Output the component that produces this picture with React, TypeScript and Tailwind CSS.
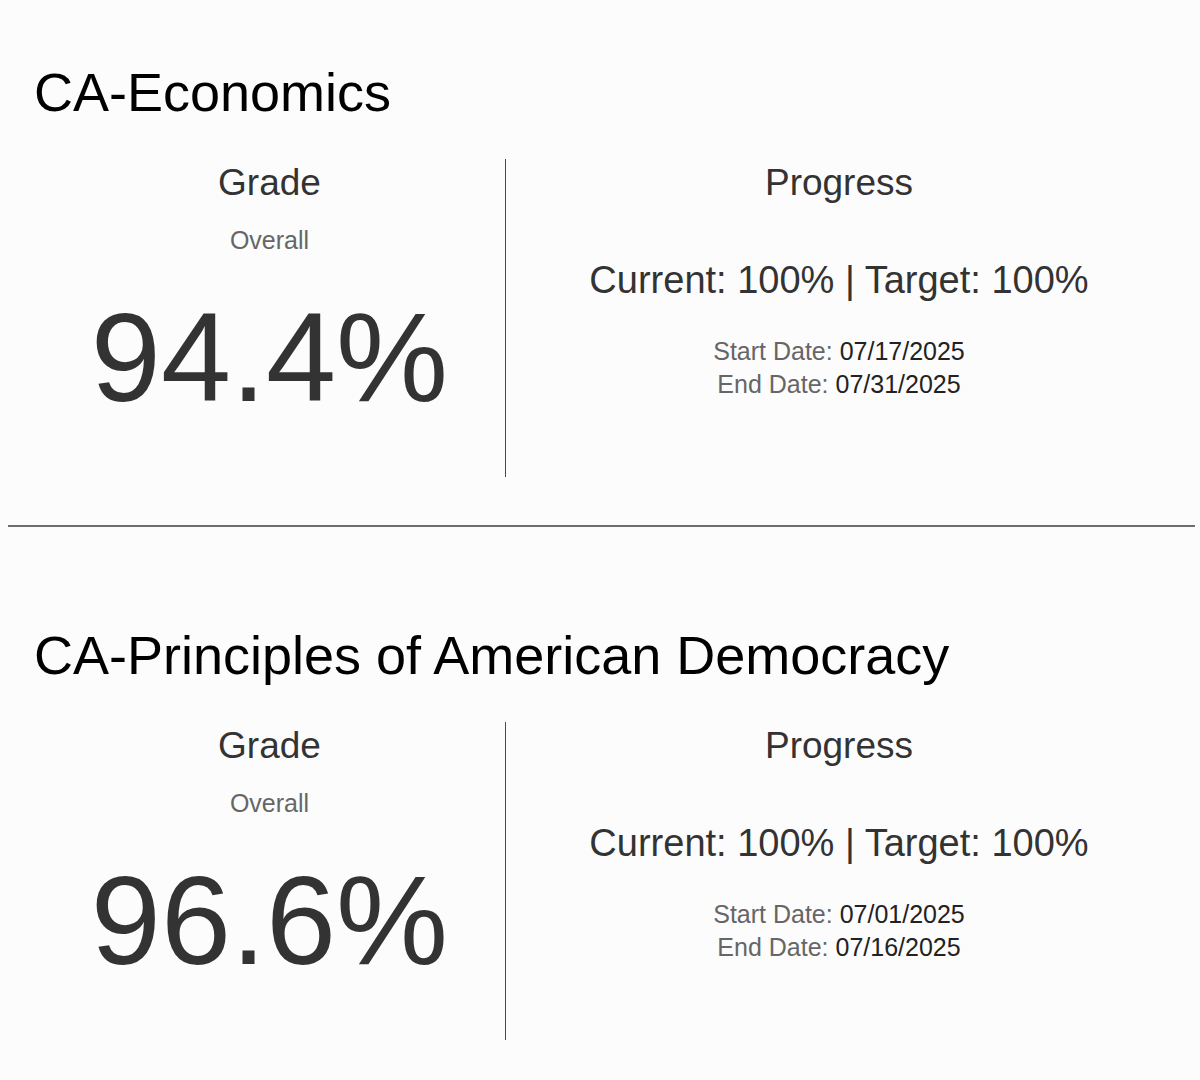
type Course = {
  title: string;
  grade: string;
  current: string;
  target: string;
  startDate: string;
  endDate: string;
};

const courses: Course[] = [
  {
    title: "CA-Economics",
    grade: "94.4%",
    current: "100%",
    target: "100%",
    startDate: "07/17/2025",
    endDate: "07/31/2025",
  },
  {
    title: "CA-Principles of American Democracy",
    grade: "96.6%",
    current: "100%",
    target: "100%",
    startDate: "07/01/2025",
    endDate: "07/16/2025",
  },
];

function CourseSection({ course }: { course: Course }) {
  return (
    <section className="pl-[34px] pr-[28px]">
      <h2 className="text-[54px] leading-[64px] font-normal text-black">
        {course.title}
      </h2>

      <div className="mt-[35px] flex h-[318px]">
        <div className="flex w-[472px] flex-col items-center border-r border-[#4a4a4a] text-center">
          <div className="text-[37px] leading-[48px] text-[#333]">Grade</div>
          <div className="mt-[18px] text-[25px] leading-[30px] text-[#666]">
            Overall
          </div>
          <div className="mt-[40px] text-[126px] leading-[126px] text-[#333]">
            {course.grade}
          </div>
        </div>

        <div className="flex flex-1 flex-col items-center text-center">
          <div className="text-[37px] leading-[48px] text-[#333]">Progress</div>
          <div className="mt-[50px] text-[38px] leading-[46px] text-[#333]">
            Current: {course.current} | Target: {course.target}
          </div>
          <div className="mt-[32px] text-[25px] leading-[33px]">
            <div>
              <span className="text-[#666]">Start Date: </span>
              <span className="text-[#222]">{course.startDate}</span>
            </div>
            <div>
              <span className="text-[#666]">End Date: </span>
              <span className="text-[#222]">{course.endDate}</span>
            </div>
          </div>
        </div>
      </div>
    </section>
  );
}

export default function App() {
  return (
    <div className="min-h-[1080px] bg-[#fcfcfc] pt-[60px] font-['Liberation_Sans',Arial,sans-serif]">
      <CourseSection course={courses[0]} />
      <div className="ml-[8px] mr-[5px] mt-[48px] border-t-2 border-[#6e6e6e]" />
      <div className="mt-[96px]">
        <CourseSection course={courses[1]} />
      </div>
    </div>
  );
}
